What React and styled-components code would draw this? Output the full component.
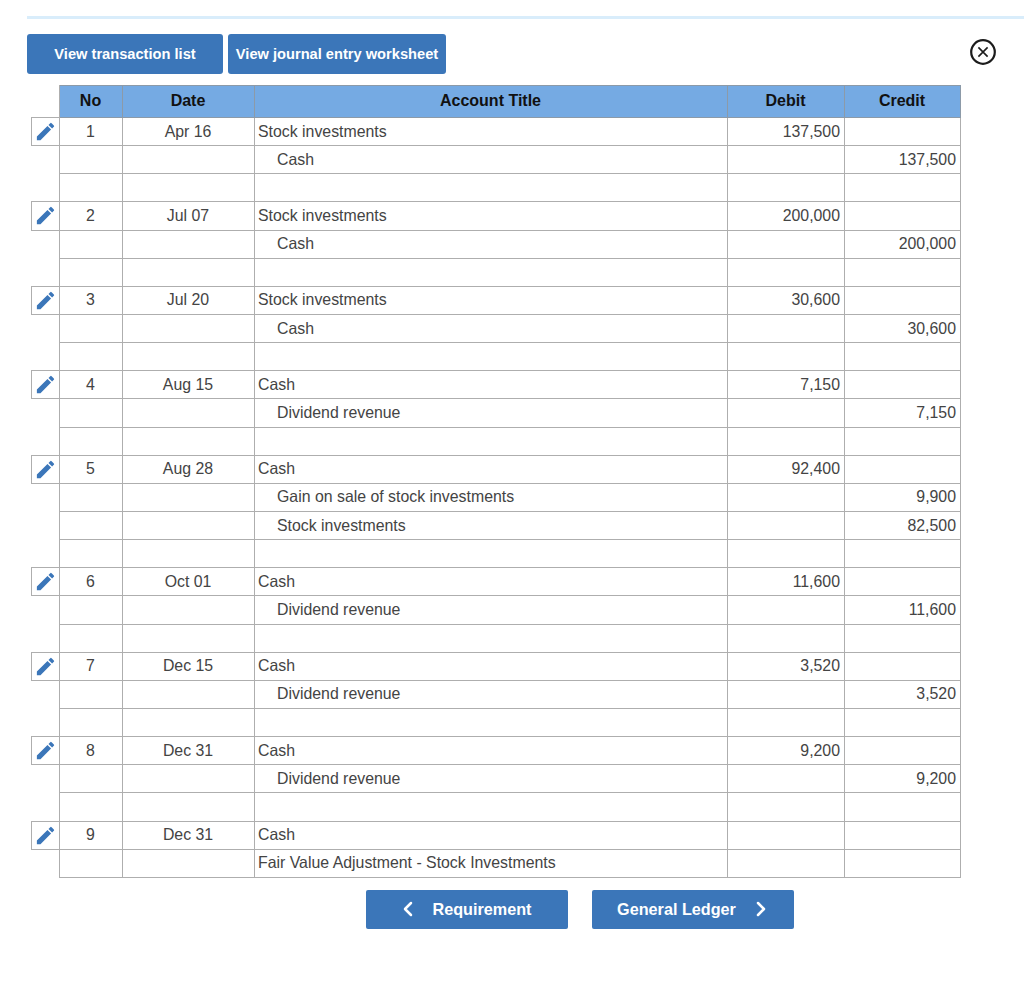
import styled, { createGlobalStyle } from "styled-components";
import { MdEdit } from "react-icons/md";
import { ChevronLeft, ChevronRight } from "lucide-react";

const entries = [
  { no: 1, date: "Apr 16", lines: [["Stock investments", "137,500", ""], ["Cash", "", "137,500"]] },
  { no: 2, date: "Jul 07", lines: [["Stock investments", "200,000", ""], ["Cash", "", "200,000"]] },
  { no: 3, date: "Jul 20", lines: [["Stock investments", "30,600", ""], ["Cash", "", "30,600"]] },
  { no: 4, date: "Aug 15", lines: [["Cash", "7,150", ""], ["Dividend revenue", "", "7,150"]] },
  { no: 5, date: "Aug 28", lines: [["Cash", "92,400", ""], ["Gain on sale of stock investments", "", "9,900"], ["Stock investments", "", "82,500"]] },
  { no: 6, date: "Oct 01", lines: [["Cash", "11,600", ""], ["Dividend revenue", "", "11,600"]] },
  { no: 7, date: "Dec 15", lines: [["Cash", "3,520", ""], ["Dividend revenue", "", "3,520"]] },
  { no: 8, date: "Dec 31", lines: [["Cash", "9,200", ""], ["Dividend revenue", "", "9,200"]] },
];

const App = () => {
  return (
    <Page>
      <GlobalStyle />
      <TopLine />
      <Toolbar>
        <TabButton $width={196}>View transaction list</TabButton>
        <TabButton $width={218}>View journal entry worksheet</TabButton>
        <CloseButton aria-label="Close">
          <svg width="26" height="26" viewBox="0 0 26 26" fill="none" stroke="#1c1c1c">
            <circle cx="13" cy="13" r="11.8" strokeWidth="2.2" />
            <path d="M8.4 8.4l9.2 9.2M17.6 8.4l-9.2 9.2" strokeWidth="1.6" />
          </svg>
        </CloseButton>
      </Toolbar>

      <Table>
        <colgroup>
          <col style={{ width: 28 }} />
          <col style={{ width: 63 }} />
          <col style={{ width: 132 }} />
          <col style={{ width: 473 }} />
          <col style={{ width: 117 }} />
          <col style={{ width: 116 }} />
        </colgroup>
        <thead>
          <tr>
            <EditCell as="th" />
            <HeadCell>No</HeadCell>
            <HeadCell>Date</HeadCell>
            <HeadCell>Account Title</HeadCell>
            <HeadCell>Debit</HeadCell>
            <HeadCell>Credit</HeadCell>
          </tr>
        </thead>
        <tbody>
          {entries.map((entry) => (
            <Entry key={entry.no} entry={entry} />
          ))}
          <tr>
            <EditCell $hasButton><PencilIcon /></EditCell>
            <CenterCell>9</CenterCell>
            <CenterCell>Dec 31</CenterCell>
            <TitleCell>Cash</TitleCell>
            <AmountCell />
            <AmountCell />
          </tr>
          <tr>
            <EditCell />
            <CenterCell />
            <CenterCell />
            <TitleCell>Fair Value Adjustment - Stock Investments</TitleCell>
            <AmountCell />
            <AmountCell />
          </tr>
        </tbody>
      </Table>

      <Footer>
        <NavButton $paddingRight={7}>
          <ChevronLeft size={24} strokeWidth={2.5} />
          Requirement
        </NavButton>
        <NavButton $paddingLeft={4}>
          General Ledger
          <ChevronRight size={24} strokeWidth={2.5} />
        </NavButton>
      </Footer>
    </Page>
  );
};

const Entry = ({ entry }) => (
  <>
    {entry.lines.map(([title, debit, credit], i) => (
      <tr key={title}>
        <EditCell $hasButton={i === 0}>{i === 0 && <PencilIcon />}</EditCell>
        <CenterCell>{i === 0 ? entry.no : ""}</CenterCell>
        <CenterCell>{i === 0 ? entry.date : ""}</CenterCell>
        <TitleCell $indent={i > 0}>{title}</TitleCell>
        <AmountCell>{debit}</AmountCell>
        <AmountCell>{credit}</AmountCell>
      </tr>
    ))}
    <tr>
      <EditCell />
      <CenterCell />
      <CenterCell />
      <TitleCell />
      <AmountCell />
      <AmountCell />
    </tr>
  </>
);

const PencilIcon = () => (
  <PencilWrap>
    <MdEdit size={23} />
  </PencilWrap>
);

const GlobalStyle = createGlobalStyle`
  html, body {
    margin: 0;
    padding: 0;
    background: #ffffff;
  }
  body {
    font-family: "Liberation Sans", Arial, sans-serif;
  }
`;

const Page = styled.div`
  width: 1024px;
  height: 985px;
  padding-top: 16px;
  box-sizing: border-box;
  overflow: hidden;
`;

const TopLine = styled.div`
  height: 3px;
  margin-left: 27px;
  background: #d9edfb;
`;

const Toolbar = styled.div`
  display: flex;
  align-items: flex-start;
  gap: 5px;
  margin: 15px 0 11px 27px;
  height: 40px;
`;

const TabButton = styled.button`
  width: ${(p) => p.$width}px;
  height: 40px;
  padding: 0 0 1px;
  border: 0;
  border-radius: 3px;
  background: #3b76b9;
  color: #ffffff;
  font: bold 14.65px "Liberation Sans", Arial, sans-serif;
  white-space: nowrap;
`;

const CloseButton = styled.button`
  margin-left: auto;
  margin-right: 28px;
  margin-top: 5px;
  width: 26px;
  height: 26px;
  padding: 0;
  border: 0;
  background: none;
  display: flex;
`;

const Table = styled.table`
  margin-left: 31px;
  width: 929px;
  table-layout: fixed;
  border-collapse: collapse;
  font-size: 15.87px;
  color: #444444;

  td, th {
    box-sizing: border-box;
    padding: 0;
  }
  tbody tr {
    height: 28.15px;
  }
  thead tr {
    height: 32px;
  }
`;

const HeadCell = styled.th`
  background: #75aae3;
  border: 1px solid #8c9aa8;
  color: #111111;
  font-weight: bold;
  font-size: 16px;
  text-align: center;
  padding: 0 1px 2px 0 !important;
`;

const EditCell = styled.td`
  border: ${(p) => (p.$hasButton ? "1px solid #aeaeae" : "0")};
  border-right: 1px solid #aeaeae;
  vertical-align: middle;
`;

const CenterCell = styled.td`
  border: 1px solid #aeaeae;
  text-align: center;
  padding-right: 1px !important;
`;

const TitleCell = styled.td`
  border: 1px solid #aeaeae;
  padding-left: ${(p) => (p.$indent ? "22px" : "3px")} !important;
  white-space: nowrap;
`;

const AmountCell = styled.td`
  border: 1px solid #aeaeae;
  text-align: right;
  padding-right: 4px !important;
`;

const PencilWrap = styled.span`
  display: flex;
  justify-content: center;
  align-items: center;
  color: #3b76b9;
`;

const Footer = styled.div`
  display: flex;
  gap: 24px;
  margin: 12px 0 0 366px;
`;

const NavButton = styled.button`
  width: 202px;
  height: 39px;
  padding: 0 ${(p) => p.$paddingRight || 0}px 0 ${(p) => p.$paddingLeft || 0}px;
  border: 0;
  border-radius: 2px;
  background: #3b76b9;
  color: #ffffff;
  font: bold 16.2px "Liberation Sans", Arial, sans-serif;
  display: flex;
  align-items: center;
  justify-content: center;
  gap: 13px;
`;

export default App;
